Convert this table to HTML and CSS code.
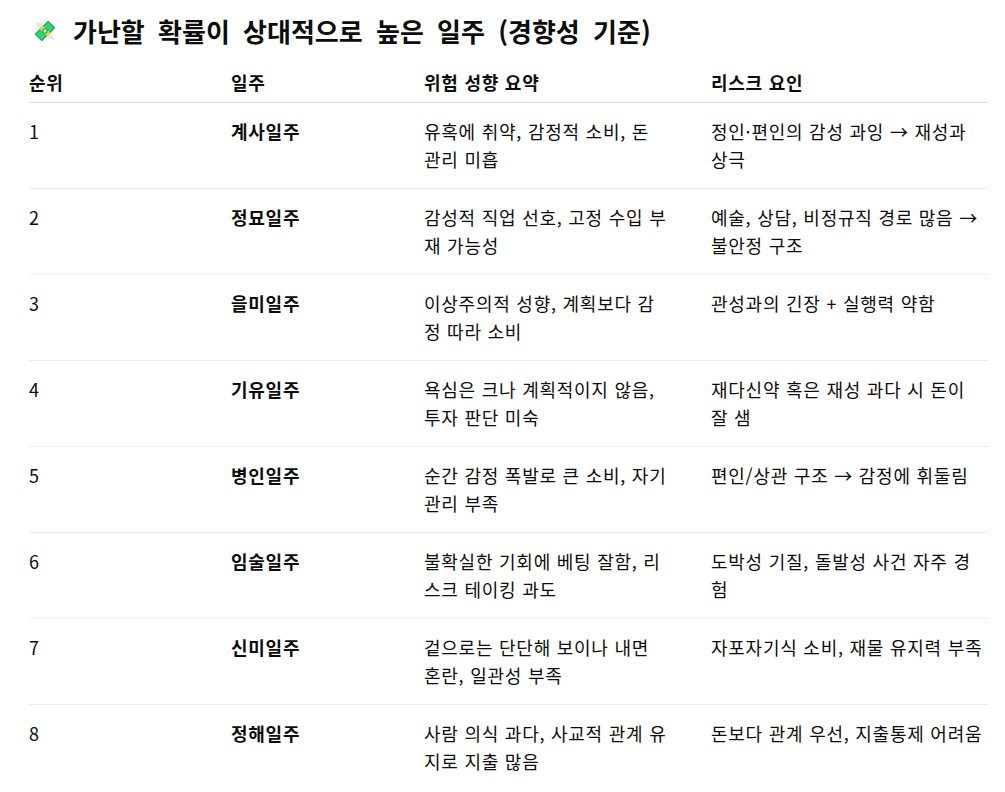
FILE: index.html
```html
<!DOCTYPE html>
<html lang="ko">
<head>
<meta charset="utf-8">
<title>가난할 확률이 상대적으로 높은 일주</title>
<link rel="stylesheet" href="styles.css">
</head>
<body>
<main class="doc">
  <h2 class="title">
    <svg class="emoji" viewBox="0 0 32 32" aria-hidden="true">
      <polygon points="3,4 14,6 9,16" fill="#e3e6e8"/>
      <polygon points="29,28 18,26 23,16" fill="#e3e6e8"/>
      <g transform="rotate(-45 16 16)">
        <rect x="3" y="9" width="26" height="14" rx="1.5" fill="#1fb655"/>
        <rect x="5" y="11" width="22" height="10" rx="1" fill="#34d27a"/>
        <rect x="13" y="9" width="6" height="14" fill="#f4d33a"/>
        <circle cx="16" cy="16" r="3.6" fill="#1a9e4a"/>
        <circle cx="16" cy="16" r="2.2" fill="#c9f3d9"/>
      </g>
    </svg>
    <span>가난할 확률이 상대적으로 높은 일주 (경향성 기준)</span>
  </h2>
  <table class="rank">
    <colgroup>
      <col class="c1"><col class="c2"><col class="c3"><col class="c4">
    </colgroup>
    <thead>
      <tr><th>순위</th><th>일주</th><th>위험 성향 요약</th><th>리스크 요인</th></tr>
    </thead>
    <tbody>
      <tr><td>1</td><td class="name">계사일주</td><td>유혹에 취약, 감정적 소비, 돈 관리 미흡</td><td>정인·편인의 감성 과잉 → 재성과 상극</td></tr>
      <tr><td>2</td><td class="name">정묘일주</td><td>감성적 직업 선호, 고정 수입 부재 가능성</td><td>예술, 상담, 비정규직 경로 많음 → 불안정 구조</td></tr>
      <tr><td>3</td><td class="name">을미일주</td><td>이상주의적 성향, 계획보다 감정 따라 소비</td><td>관성과의 긴장 + 실행력 약함</td></tr>
      <tr><td>4</td><td class="name">기유일주</td><td>욕심은 크나 계획적이지 않음, 투자 판단 미숙</td><td>재다신약 혹은 재성 과다 시 돈이 잘 샘</td></tr>
      <tr><td>5</td><td class="name">병인일주</td><td>순간 감정 폭발로 큰 소비, 자기 관리 부족</td><td>편인/상관 구조 → 감정에 휘둘림</td></tr>
      <tr><td>6</td><td class="name">임술일주</td><td>불확실한 기회에 베팅 잘함, 리스크 테이킹 과도</td><td>도박성 기질, 돌발성 사건 자주 경험</td></tr>
      <tr><td>7</td><td class="name">신미일주</td><td>겉으로는 단단해 보이나 내면 혼란, 일관성 부족</td><td>자포자기식 소비, 재물 유지력 부족</td></tr>
      <tr><td>8</td><td class="name">정해일주</td><td>사람 의식 과다, 사교적 관계 유지로 지출 많음</td><td>돈보다 관계 우선, 지출통제 어려움</td></tr>
    </tbody>
  </table>
</main>
</body>
</html>
```

FILE: styles.css
```css
html, body {
  margin: 0;
  padding: 0;
  background: #ffffff;
}

body {
  font-family: "Noto Sans CJK KR", "Noto Sans", sans-serif;
  color: #0d0d0d;
  font-size: 18px;
}

.doc {
  padding: 0 17px 0 29px;
}

.title {
  display: flex;
  align-items: center;
  gap: 16px;
  margin: 15px 0 13px 4px;
  font-size: 26px;
  line-height: 32px;
  font-weight: 700;
  word-spacing: 6px;
}

.emoji {
  width: 24px;
  height: 24px;
  flex: none;
}

.rank {
  width: 959px;
  border-collapse: collapse;
  table-layout: fixed;
  letter-spacing: 0.75px;
}

.c1 { width: 202px; }
.c2 { width: 193px; }
.c3 { width: 287px; }
.c4 { width: 277px; }

.rank th {
  text-align: left;
  font-weight: 700;
  line-height: 28px;
  padding: 8px 0 6px;
  border-bottom: 1px solid #d9d9d9;
}

.rank td {
  vertical-align: top;
  line-height: 28px;
  padding: 14px 0 15px;
  border-bottom: 1px solid #ececec;
}

.rank tbody tr:last-child td {
  border-bottom: none;
}

.rank td:nth-child(3) {
  padding-right: 42px;
}

.rank td:nth-child(4) {
  padding-right: 3px;
}

.rank td.name {
  font-weight: 700;
}
```
